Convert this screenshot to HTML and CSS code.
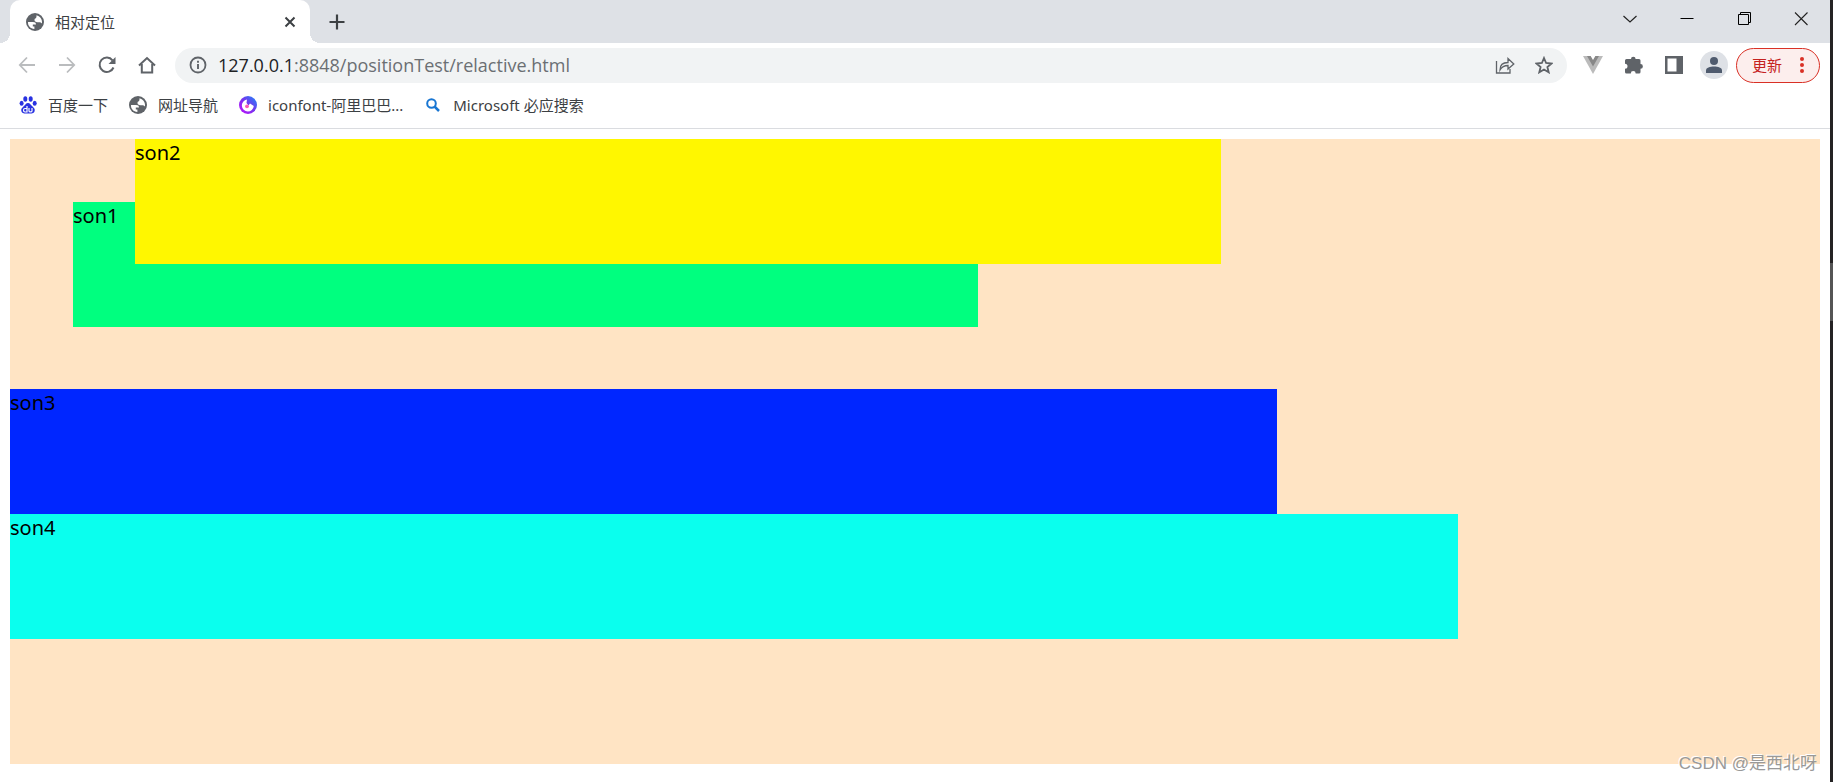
FILE: index.html
```html
<!DOCTYPE html>
<html lang="zh-CN">
<head>
<meta charset="utf-8">
<title>相对定位</title>
<link rel="stylesheet" href="styles.css">
</head>
<body>
<svg class="defs" aria-hidden="true">
  <symbol id="globe" viewBox="0 0 18 18">
    <circle cx="9" cy="9" r="9" fill="#5f6368"/>
    <path d="M2 9h5c2 0 3 .8 3 2.500H6.800v2h1.600V16C4.500 15.800 1.700 12.700 2 9zM10.500 2.200c3.300.9 5.500 3.500 5.500 6.800 0 .5 0 1-.2 1.500-.6-.8-1.400-1.300-2.800-1.300h-1.500c-2 0-3-.8-3-2.200 0-1 .5-1.700 1.300-1.800.6-.4.7-1.500.7-3z" fill="#fff"/>
  </symbol>
</svg>
<div class="window">
  <div class="browser">
    <header class="tabs">
      <div class="tab">
        <svg class="icon" viewBox="0 0 18 18"><use href="#globe"/></svg>
        <span class="tab-title">相对定位</span>
        <button class="plain" aria-label="关闭标签页"><svg class="icon" viewBox="0 0 18 18"><path d="M4.500 4.500l9 9m0-9l-9 9" stroke="#3c4043" stroke-width="2"/></svg></button>
      </div>
      <button class="plain new-tab" aria-label="新标签页"><svg class="icon" viewBox="0 0 18 18"><path d="M9 1.500v15M1.500 9h15" stroke="#3c4043" stroke-width="2.200"/></svg></button>
      <div class="captions">
        <button class="plain" aria-label="搜索标签页"><svg class="icon" viewBox="0 0 18 18"><path d="M2.500 6l6.500 6 6.500-6" stroke="#222" fill="none" stroke-width="1.200"/></svg></button>
        <button class="plain" aria-label="最小化"><svg class="icon" viewBox="0 0 18 18"><path d="M2.500 8.500h13" stroke="#000"/></svg></button>
        <button class="plain" aria-label="还原"><svg class="icon" viewBox="0 0 18 18"><path d="M3.500 4.500h10v10h-10zM5.500 4V2.500h10v10H14" stroke="#000" fill="none"/></svg></button>
        <button class="plain" aria-label="关闭"><svg class="icon" viewBox="0 0 18 18"><path d="M3 2.500L15.500 15M15.500 2.500L3 15" stroke="#222" stroke-width="1.100"/></svg></button>
      </div>
    </header>
    <nav class="toolbar">
      <div class="nav-buttons">
        <button class="plain" aria-label="后退"><svg class="icon" viewBox="0 0 18 18"><path d="M17 9H2M9 1.500L1.800 9 9 16.500" stroke="#babcbe" stroke-width="1.800" fill="none"/></svg></button>
        <button class="plain" aria-label="前进"><svg class="icon" viewBox="0 0 18 18"><path d="M1 9h15M9 1.500L16.200 9 9 16.500" stroke="#babcbe" stroke-width="1.800" fill="none"/></svg></button>
        <button class="plain" aria-label="重新加载"><svg class="icon" viewBox="0 0 18 18"><path d="M15.500 11.500A7.200 7.200 0 1 1 14.500 4.300" stroke="#5f6368" stroke-width="2" fill="none"/><path d="M17.500 1v7h-7z" fill="#5f6368"/></svg></button>
        <button class="plain" aria-label="主页"><svg class="icon" viewBox="0 0 18 18"><path d="M1 9.500L9 2l8 7.500M3.800 8v8.500h10.400V8" stroke="#5f6368" stroke-width="2" fill="none"/></svg></button>
      </div>
      <div class="address">
        <svg class="icon" viewBox="0 0 18 18"><circle cx="9" cy="9" r="7.500" stroke="#5f6368" stroke-width="1.800" fill="none"/><path d="M9 8v5M9 4.800v1.900" stroke="#5f6368" stroke-width="1.900"/></svg>
        <a class="url" href="#">127.0.0.1<span class="path">:8848/positionTest/relactive.html</span></a>
        <button class="plain" aria-label="分享"><svg class="icon wide" viewBox="0 0 20 18"><path d="M1.500 5v12h13.500v-4M5 14c0-5 3-7.500 8-7.500V2.500L18.800 8 13 13V9.500c-3.500 0-6 1-8 4.500z" stroke="#5f6368" stroke-width="1.300" fill="none"/></svg></button>
        <button class="plain" aria-label="收藏"><svg class="icon" viewBox="0 0 18 18"><path d="M9 2l2.100 5 5.400.5-4.100 3.500 1.300 5.300L9 13.500l-4.700 2.800L5.600 11 1.500 7.500 6.900 7z" stroke="#5f6368" stroke-width="1.800" fill="none"/></svg></button>
      </div>
      <div class="extensions">
        <button class="plain" aria-label="Vue"><svg class="icon wide" viewBox="0 0 20 18"><path d="M0 0h20L10 18z" fill="#bbb"/><path d="M4 0h4l2 3.500L12 0h4l-6 10.500z" fill="#888"/><path d="M7.700 0h4.600L10 4z" fill="#fff"/></svg></button>
        <button class="plain" aria-label="扩展程序"><svg class="icon" viewBox="0 0 18 18"><path d="M6 3a2.300 2.300 0 0 1 4.600 0H14a1.500 1.500 0 0 1 1.500 1.500V8a2.400 2.400 0 0 1 0 4.800V16a1.500 1.500 0 0 1-1.500 1.500h-3.300a2.400 2.400 0 0 0-4.900 0H1.500A1.500 1.500 0 0 1 0 16v-3.300a2.500 2.500 0 0 0 0-5V4.500A1.500 1.500 0 0 1 1.500 3z" fill="#5f6368"/></svg></button>
        <button class="plain" aria-label="侧边栏"><svg class="icon" viewBox="0 0 18 18"><path d="M0 0h18v18H0zM2.500 2.500v13h9v-13z" fill="#5f6368" fill-rule="evenodd"/></svg></button>
        <button class="plain avatar" aria-label="用户"><svg class="icon" viewBox="0 0 18 18"><circle cx="9" cy="5" r="4" fill="#4f5b6e"/><path d="M1 17v-2.500C1 11.500 5 10.500 9 10.500s8 1 8 4V17z" fill="#4f5b6e"/></svg></button>
        <button class="update">更新<svg class="dots" viewBox="0 0 4 18"><g fill="#d93025"><circle cx="2" cy="3" r="2"/><circle cx="2" cy="9" r="2"/><circle cx="2" cy="15" r="2"/></g></svg></button>
      </div>
    </nav>
    <nav class="bookmarks">
      <a href="#"><svg class="icon" viewBox="0 0 18 18"><g fill="#2932e1"><ellipse cx="6.300" cy="3" rx="2" ry="2.800"/><ellipse cx="11.700" cy="3" rx="2" ry="2.800"/><ellipse cx="2.600" cy="7.300" rx="2" ry="2.500"/><ellipse cx="15.700" cy="7.300" rx="2" ry="2.500"/><path d="M9 7c2 0 2.800 2 4.300 3.300 1.800 1.500 3 3 2.300 5-.8 2.600-3.500 2.400-6.600 2.200-3.100.2-5.800.4-6.600-2.200-.7-2 .5-3.500 2.300-5C6.200 9 7 7 9 7z"/></g><path d="M8 10v6H6c-2 0-2-3.500 0-3.500h2M10 12v3c0 1.200 3 1.200 3 0v-3" stroke="#fff" fill="none" stroke-width="1.200"/></svg>百度一下</a>
      <a href="#"><svg class="icon" viewBox="0 0 18 18"><use href="#globe"/></svg>网址导航</a>
      <a href="#"><svg class="icon" viewBox="0 0 18 18"><defs><linearGradient id="ring" x1="1" y1="0" x2="0" y2="1"><stop offset="0" stop-color="#168df8"/><stop offset=".5" stop-color="#7a32ee"/><stop offset="1" stop-color="#c60cff"/></linearGradient></defs><circle cx="9" cy="9" r="9" fill="url(#ring)"/><path d="M8 3.500A6 6 0 1 0 14.800 10L11 7.500 9.500 9.500 7.500 7z" fill="#fff"/><circle cx="8" cy="10.300" r="1.900" fill="#fb5bb5"/></svg>iconfont-阿里巴巴...</a>
      <a href="#"><svg class="icon" viewBox="0 0 18 18"><circle cx="7.500" cy="7.500" r="4.300" stroke="#1976d2" stroke-width="2" fill="none"/><path d="M10.500 10.500l4.500 4.500" stroke="#1976d2" stroke-width="2.500"/></svg>Microsoft 必应搜索</a>
    </nav>
    <main class="page">
      <div class="father">
        <div class="son son1">son1</div>
        <div class="son son2">son2</div>
        <div class="son son3">son3</div>
        <div class="son son4">son4</div>
      </div>
    </main>
  </div>
  <div class="edge"><div class="edge-mark"></div></div>
  <div class="watermark">CSDN @是西北呀</div>
</div>
</body>
</html>
```

FILE: styles.css
```css
* { box-sizing: border-box; }
body {
  margin: 0;
  background: #fff;
  color: #3c4043;
  font: 15px/20px "Noto Sans", "Noto Sans CJK SC", sans-serif;
}
.defs { position: absolute; width: 0; height: 0; }
.window { position: relative; display: flex; min-height: 100vh; }
.browser { flex: 1; min-width: 0; }
.icon { display: block; flex: none; width: 18px; height: 18px; }
.icon.wide { width: 20px; }
.plain { display: block; padding: 0; border: 0; background: none; }
a { color: inherit; text-decoration: none; }

.tabs { display: flex; height: 43px; background: #dee1e6; padding-left: 10px; }
.tab {
  position: relative;
  display: flex;
  align-items: center;
  gap: 11px;
  width: 300px;
  padding: 0 11px 0 16px;
  border-radius: 10px 10px 0 0;
  background: #fff;
}
.tab::before, .tab::after {
  content: "";
  position: absolute;
  bottom: 0;
  width: 10px;
  height: 10px;
}
.tab::before { right: 100%; background: radial-gradient(circle at 0 0, transparent 10px, #fff 10px); }
.tab::after { left: 100%; background: radial-gradient(circle at 100% 0, transparent 10px, #fff 10px); }
.tab-title { flex: 1; }
.new-tab { margin-left: 18px; }
.captions { display: flex; align-items: flex-start; gap: 39px; margin-left: auto; padding: 10px 20px 0 0; }

.toolbar { display: flex; align-items: center; height: 44px; padding: 0 10px 0 18px; }
.nav-buttons { display: flex; gap: 22px; margin-right: 19px; }
.address {
  display: flex;
  flex: 1;
  align-items: center;
  gap: 20px;
  height: 35px;
  padding: 0 14px;
  border-radius: 18px;
  background: #f1f3f4;
}
.address > .icon { margin-right: -9px; }
.url { flex: 1; color: #202124; font-family: "Open Sans", sans-serif; font-size: 18px; line-height: 24px; }
.path { color: #6b6f73; }
.extensions { display: flex; align-items: center; gap: 22px; margin-left: 16px; }
.avatar { margin: 0 -14px 0 -5px; padding: 5px; border-radius: 50%; background: #dee1e6; }
.update {
  display: flex;
  align-items: center;
  justify-content: space-between;
  width: 84px;
  height: 35px;
  padding: 0 15px;
  border: 1px solid #d93025;
  border-radius: 18px;
  background: #fceeed;
  color: #c5221f;
  font: inherit;
}
.dots { width: 4px; height: 18px; }

.bookmarks { display: flex; align-items: center; gap: 21px; height: 42px; padding: 0 19px 5px; border-bottom: 1px solid #dadce0; }
.bookmarks a { display: flex; align-items: center; gap: 11px; }

.page { padding: 10px; color: #000; font-size: 20px; line-height: 28px; }
.father { height: 625px; background: #ffe4c4; }
.son { height: 125px; }
.son1 { position: relative; top: 63px; left: 63px; width: 50%; background: #00ff7f; }
.son2 { position: relative; top: -125px; left: 125px; width: 60%; background: #fff700; }
.son3 { width: 70%; background: #0026ff; }
.son4 { width: 80%; background: #0affee; }

.edge { width: 3px; background: #252324; }
.edge-mark { height: 58px; margin-top: 263px; background: #555; }
.watermark {
  position: absolute;
  right: 16px;
  bottom: 6px;
  color: #999;
  font: 17px/24px "Liberation Sans", "Noto Sans CJK SC", sans-serif;
  text-shadow: -1px -1px 0 #fff;
}
```
